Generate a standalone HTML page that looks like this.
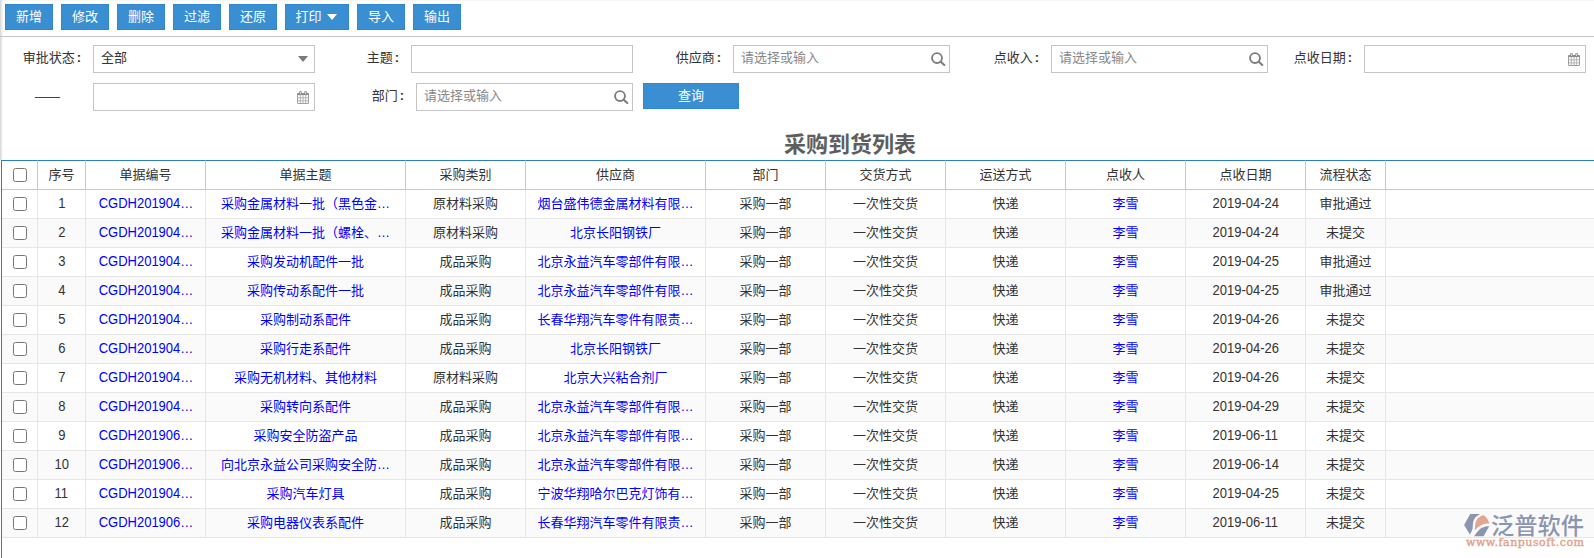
<!DOCTYPE html>
<html lang="zh-CN">
<head>
<meta charset="utf-8">
<title>采购到货列表</title>
<style>
*{box-sizing:border-box;margin:0;padding:0}
html,body{width:1594px;height:558px;overflow:hidden;background:#fff}
body{position:relative;font-family:"Liberation Sans","Noto Sans CJK SC",sans-serif;font-size:13px;color:#333}
.abs{position:absolute}
.edge{left:0;top:0;width:3px;height:160px;background:linear-gradient(90deg,#dbdbdb 0,#dbdbdb 1px,#e9e9e9 1px,#e9e9e9 2px,#f7f7f7 2px,#f7f7f7 3px)}
.btn{position:absolute;top:4px;height:26px;width:48px;background:#3a8fd3;border:1px solid #3188d0;color:#fff;font-size:13px;line-height:23px;text-align:center;white-space:nowrap}
.btn .car{display:inline-block;width:0;height:0;border-left:5px solid transparent;border-right:5px solid transparent;border-top:6px solid #fff;margin-left:5px;vertical-align:1px}
.hr{left:0;top:36px;width:1594px;height:1px;background:#c4c4c4}
.lbl{position:absolute;height:28px;line-height:25px;text-align:right;white-space:nowrap;color:#333}
.inp{position:absolute;height:28px;border:1px solid #c4c4c4;background:#fff;line-height:23px;padding-left:7px;color:#888;white-space:nowrap}
.inp.sel{color:#333}
.tri{position:absolute;right:6px;top:10px;width:0;height:0;border-left:5px solid transparent;border-right:5px solid transparent;border-top:6px solid #7b7b7b}
.ico{position:absolute}
.lbl b{margin-left:2px}
.q{position:absolute;left:643px;top:83px;width:96px;height:26px;background:#3a8fd3;border:1px solid #3188d0;color:#fff;text-align:center;line-height:23px}
.title{left:650px;top:129px;width:400px;text-align:center;font-size:22px;font-weight:bold;color:#5e5e5e;line-height:32px;white-space:nowrap}
.lb{left:1px;top:160px;width:1px;height:398px;background:#2e7ebc}
table{position:absolute;left:2px;top:160px;width:1592px;border-collapse:separate;border-spacing:0;table-layout:fixed}
th,td{height:29px;font-weight:normal;font-size:13px;text-align:center;white-space:nowrap;overflow:hidden;padding:0;vertical-align:middle;line-height:16px}
th{height:30px;padding-bottom:1px;border-right:1px solid #c8c8c8;border-bottom:1px solid #c8c8c8;border-top:1px solid #2e7ebc;color:#333}
td{border-right:1px solid #e6e6e6;border-bottom:1px solid #e6e6e6;color:#333}
th:last-child,td:last-child{border-right:none}
tbody tr:nth-child(even) td{background:#fafafa}
td.lk{color:#0000ff}
.n{display:inline-block;font-size:14px;transform:scaleX(0.9286);transform-origin:50% 50%;margin:0 -4px;position:relative;top:-1px}
.cb{display:block;width:14px;height:14px;border:1px solid #767676;border-radius:2.5px;background:#fff;margin:0 0 0 11px}
th.ck{padding-bottom:0}
.wm{left:1460px;top:510px;line-height:0}
</style>
</head>
<body>
<div class="abs" style="left:0;top:0;width:1594px;height:1px;background:#f6f6f6"></div>
<div class="abs edge"></div>
<div class="btn" style="left:5px">新增</div>
<div class="btn" style="left:61px">修改</div>
<div class="btn" style="left:117px">删除</div>
<div class="btn" style="left:173px">过滤</div>
<div class="btn" style="left:229px">还原</div>
<div class="btn" style="left:285px;width:64px;padding-right:2px">打印<span class="car"></span></div>
<div class="btn" style="left:357px">导入</div>
<div class="btn" style="left:413px">输出</div>
<div class="abs hr"></div>

<div class="lbl" style="left:0;width:81px;top:45px">审批状态<b>:</b></div>
<div class="inp sel" style="left:93px;top:45px;width:222px">全部<span class="tri"></span></div>
<div class="lbl" style="left:300px;width:99px;top:45px">主题<b>:</b></div>
<div class="inp" style="left:411px;top:45px;width:222px"></div>
<div class="lbl" style="left:620px;width:101px;top:45px">供应商<b>:</b></div>
<div class="inp" style="left:733px;top:45px;width:217px">请选择或输入<svg class="ico" style="left:196px;top:5px" width="18" height="18" viewBox="0 0 18 18"><circle cx="7" cy="7.1" r="4.95" fill="none" stroke="#7d7d7d" stroke-width="1.9"/><path d="M10.7 10.8 L14.3 14" stroke="#7d7d7d" stroke-width="2.1" stroke-linecap="round"/></svg></div>
<div class="lbl" style="left:940px;width:99px;top:45px">点收入<b>:</b></div>
<div class="inp" style="left:1051px;top:45px;width:217px">请选择或输入<svg class="ico" style="left:196px;top:5px" width="18" height="18" viewBox="0 0 18 18"><circle cx="7" cy="7.1" r="4.95" fill="none" stroke="#7d7d7d" stroke-width="1.9"/><path d="M10.7 10.8 L14.3 14" stroke="#7d7d7d" stroke-width="2.1" stroke-linecap="round"/></svg></div>
<div class="lbl" style="left:1250px;width:102px;top:45px">点收日期<b>:</b></div>
<div class="inp" style="left:1364px;top:45px;width:222px"><svg class="ico" style="left:203px;top:7px" width="12" height="13" viewBox="0 0 12 13"><rect x="0.45" y="2.45" width="11.1" height="10.1" rx="0.6" fill="#fff" stroke="#8c8c8c" stroke-width="0.9"/><rect x="0.45" y="2.2" width="11.1" height="1.9" fill="#8c8c8c"/><path d="M3.3 4V12.5M6 4V12.5M8.7 4V12.5M0.5 6.85H11.5M0.5 9.85H11.5" stroke="#a8a8a8" stroke-width="0.85" fill="none"/><rect x="2.2" y="0.1" width="2.5" height="3.5" rx="1" fill="#8c8c8c"/><rect x="7.3" y="0.1" width="2.5" height="3.5" rx="1" fill="#8c8c8c"/><rect x="3" y="0.8" width="0.9" height="2.1" fill="#e6e6e6"/><rect x="8.1" y="0.8" width="0.9" height="2.1" fill="#e6e6e6"/></svg></div>

<div class="lbl" style="left:0;width:59px;top:83px;line-height:27px;letter-spacing:-1px;color:#444">——</div>
<div class="inp" style="left:93px;top:83px;width:222px"><svg class="ico" style="left:203px;top:7px" width="12" height="13" viewBox="0 0 12 13"><rect x="0.45" y="2.45" width="11.1" height="10.1" rx="0.6" fill="#fff" stroke="#8c8c8c" stroke-width="0.9"/><rect x="0.45" y="2.2" width="11.1" height="1.9" fill="#8c8c8c"/><path d="M3.3 4V12.5M6 4V12.5M8.7 4V12.5M0.5 6.85H11.5M0.5 9.85H11.5" stroke="#a8a8a8" stroke-width="0.85" fill="none"/><rect x="2.2" y="0.1" width="2.5" height="3.5" rx="1" fill="#8c8c8c"/><rect x="7.3" y="0.1" width="2.5" height="3.5" rx="1" fill="#8c8c8c"/><rect x="3" y="0.8" width="0.9" height="2.1" fill="#e6e6e6"/><rect x="8.1" y="0.8" width="0.9" height="2.1" fill="#e6e6e6"/></svg></div>
<div class="lbl" style="left:300px;width:104px;top:83px">部门<b>:</b></div>
<div class="inp" style="left:416px;top:83px;width:217px">请选择或输入<svg class="ico" style="left:196px;top:5px" width="18" height="18" viewBox="0 0 18 18"><circle cx="7" cy="7.1" r="4.95" fill="none" stroke="#7d7d7d" stroke-width="1.9"/><path d="M10.7 10.8 L14.3 14" stroke="#7d7d7d" stroke-width="2.1" stroke-linecap="round"/></svg></div>
<div class="q">查询</div>

<div class="abs title">采购到货列表</div>
<div class="abs lb"></div>
<table>
<colgroup><col style="width:36px"><col style="width:48px"><col style="width:120px"><col style="width:200px"><col style="width:120px"><col style="width:180px"><col style="width:120px"><col style="width:120px"><col style="width:120px"><col style="width:120px"><col style="width:120px"><col style="width:80px"><col></colgroup>
<thead><tr><th class="ck"><span class="cb"></span></th><th>序号</th><th>单据编号</th><th>单据主题</th><th>采购类别</th><th>供应商</th><th>部门</th><th>交货方式</th><th>运送方式</th><th>点收人</th><th>点收日期</th><th>流程状态</th><th></th></tr></thead>
<tbody>
<tr><td class="ck"><span class="cb"></span></td><td><span class="n">1</span></td><td class="lk"><span class="n">CGDH201904…</span></td><td class="lk">采购金属材料一批（黑色金…</td><td>原材料采购</td><td class="lk">烟台盛伟德金属材料有限…</td><td>采购一部</td><td>一次性交货</td><td>快递</td><td class="lk">李雪</td><td><span class="n">2019-04-24</span></td><td>审批通过</td><td></td></tr>
<tr><td class="ck"><span class="cb"></span></td><td><span class="n">2</span></td><td class="lk"><span class="n">CGDH201904…</span></td><td class="lk">采购金属材料一批（螺栓、…</td><td>原材料采购</td><td class="lk">北京长阳钢铁厂</td><td>采购一部</td><td>一次性交货</td><td>快递</td><td class="lk">李雪</td><td><span class="n">2019-04-24</span></td><td>未提交</td><td></td></tr>
<tr><td class="ck"><span class="cb"></span></td><td><span class="n">3</span></td><td class="lk"><span class="n">CGDH201904…</span></td><td class="lk">采购发动机配件一批</td><td>成品采购</td><td class="lk">北京永益汽车零部件有限…</td><td>采购一部</td><td>一次性交货</td><td>快递</td><td class="lk">李雪</td><td><span class="n">2019-04-25</span></td><td>审批通过</td><td></td></tr>
<tr><td class="ck"><span class="cb"></span></td><td><span class="n">4</span></td><td class="lk"><span class="n">CGDH201904…</span></td><td class="lk">采购传动系配件一批</td><td>成品采购</td><td class="lk">北京永益汽车零部件有限…</td><td>采购一部</td><td>一次性交货</td><td>快递</td><td class="lk">李雪</td><td><span class="n">2019-04-25</span></td><td>审批通过</td><td></td></tr>
<tr><td class="ck"><span class="cb"></span></td><td><span class="n">5</span></td><td class="lk"><span class="n">CGDH201904…</span></td><td class="lk">采购制动系配件</td><td>成品采购</td><td class="lk">长春华翔汽车零件有限责…</td><td>采购一部</td><td>一次性交货</td><td>快递</td><td class="lk">李雪</td><td><span class="n">2019-04-26</span></td><td>未提交</td><td></td></tr>
<tr><td class="ck"><span class="cb"></span></td><td><span class="n">6</span></td><td class="lk"><span class="n">CGDH201904…</span></td><td class="lk">采购行走系配件</td><td>成品采购</td><td class="lk">北京长阳钢铁厂</td><td>采购一部</td><td>一次性交货</td><td>快递</td><td class="lk">李雪</td><td><span class="n">2019-04-26</span></td><td>未提交</td><td></td></tr>
<tr><td class="ck"><span class="cb"></span></td><td><span class="n">7</span></td><td class="lk"><span class="n">CGDH201904…</span></td><td class="lk">采购无机材料、其他材料</td><td>原材料采购</td><td class="lk">北京大兴粘合剂厂</td><td>采购一部</td><td>一次性交货</td><td>快递</td><td class="lk">李雪</td><td><span class="n">2019-04-26</span></td><td>未提交</td><td></td></tr>
<tr><td class="ck"><span class="cb"></span></td><td><span class="n">8</span></td><td class="lk"><span class="n">CGDH201904…</span></td><td class="lk">采购转向系配件</td><td>成品采购</td><td class="lk">北京永益汽车零部件有限…</td><td>采购一部</td><td>一次性交货</td><td>快递</td><td class="lk">李雪</td><td><span class="n">2019-04-29</span></td><td>未提交</td><td></td></tr>
<tr><td class="ck"><span class="cb"></span></td><td><span class="n">9</span></td><td class="lk"><span class="n">CGDH201906…</span></td><td class="lk">采购安全防盗产品</td><td>成品采购</td><td class="lk">北京永益汽车零部件有限…</td><td>采购一部</td><td>一次性交货</td><td>快递</td><td class="lk">李雪</td><td><span class="n">2019-06-11</span></td><td>未提交</td><td></td></tr>
<tr><td class="ck"><span class="cb"></span></td><td><span class="n">10</span></td><td class="lk"><span class="n">CGDH201906…</span></td><td class="lk">向北京永益公司采购安全防…</td><td>成品采购</td><td class="lk">北京永益汽车零部件有限…</td><td>采购一部</td><td>一次性交货</td><td>快递</td><td class="lk">李雪</td><td><span class="n">2019-06-14</span></td><td>未提交</td><td></td></tr>
<tr><td class="ck"><span class="cb"></span></td><td><span class="n">11</span></td><td class="lk"><span class="n">CGDH201904…</span></td><td class="lk">采购汽车灯具</td><td>成品采购</td><td class="lk">宁波华翔哈尔巴克灯饰有…</td><td>采购一部</td><td>一次性交货</td><td>快递</td><td class="lk">李雪</td><td><span class="n">2019-04-25</span></td><td>未提交</td><td></td></tr>
<tr><td class="ck"><span class="cb"></span></td><td><span class="n">12</span></td><td class="lk"><span class="n">CGDH201906…</span></td><td class="lk">采购电器仪表系配件</td><td>成品采购</td><td class="lk">长春华翔汽车零件有限责…</td><td>采购一部</td><td>一次性交货</td><td>快递</td><td class="lk">李雪</td><td><span class="n">2019-06-11</span></td><td>未提交</td><td></td></tr>
</tbody>
</table>

<div class="abs wm">
<svg width="134" height="48" viewBox="1460 510 134 48">
<path d="M1470.2 514 L1480.2 514 C1476.5 515.6 1474.3 518.2 1473.4 521.3 C1472.6 524.2 1473 527.6 1472.4 529.2 C1471.8 531.2 1470.9 532.8 1469.9 534.5 L1464.1 525 Z" fill="#8a95af"/>
<path d="M1483.6 515.1 C1486.6 517.3 1488.4 520 1489.3 523.2 C1483 523.4 1478.3 526.2 1474.8 530.5 C1475 527.6 1475 525 1475.6 522.4 C1476.6 518.6 1479.8 516.3 1483.6 515.1 Z" fill="#e2a58f"/>
<path d="M1489.3 526.1 L1483.6 536.3 L1474.1 536.3 C1475.4 534.6 1476.5 533 1477.7 531.5 C1480.4 528 1484.3 526.2 1489.3 526.1 Z" fill="#8a95af"/>
<text x="1491" y="533.6" font-family="'Noto Sans CJK SC',sans-serif" font-size="23" font-weight="500" fill="#8a95af" textLength="93" lengthAdjust="spacingAndGlyphs">泛普软件</text>
<text x="1466" y="545.9" font-family="'DejaVu Serif','Liberation Serif',serif" font-size="11" font-weight="normal" fill="#e0a089" stroke="#e0a089" stroke-width="0.35" textLength="118" lengthAdjust="spacing">www.fanpusoft.com</text>
</svg>
</div>
</body>
</html>
